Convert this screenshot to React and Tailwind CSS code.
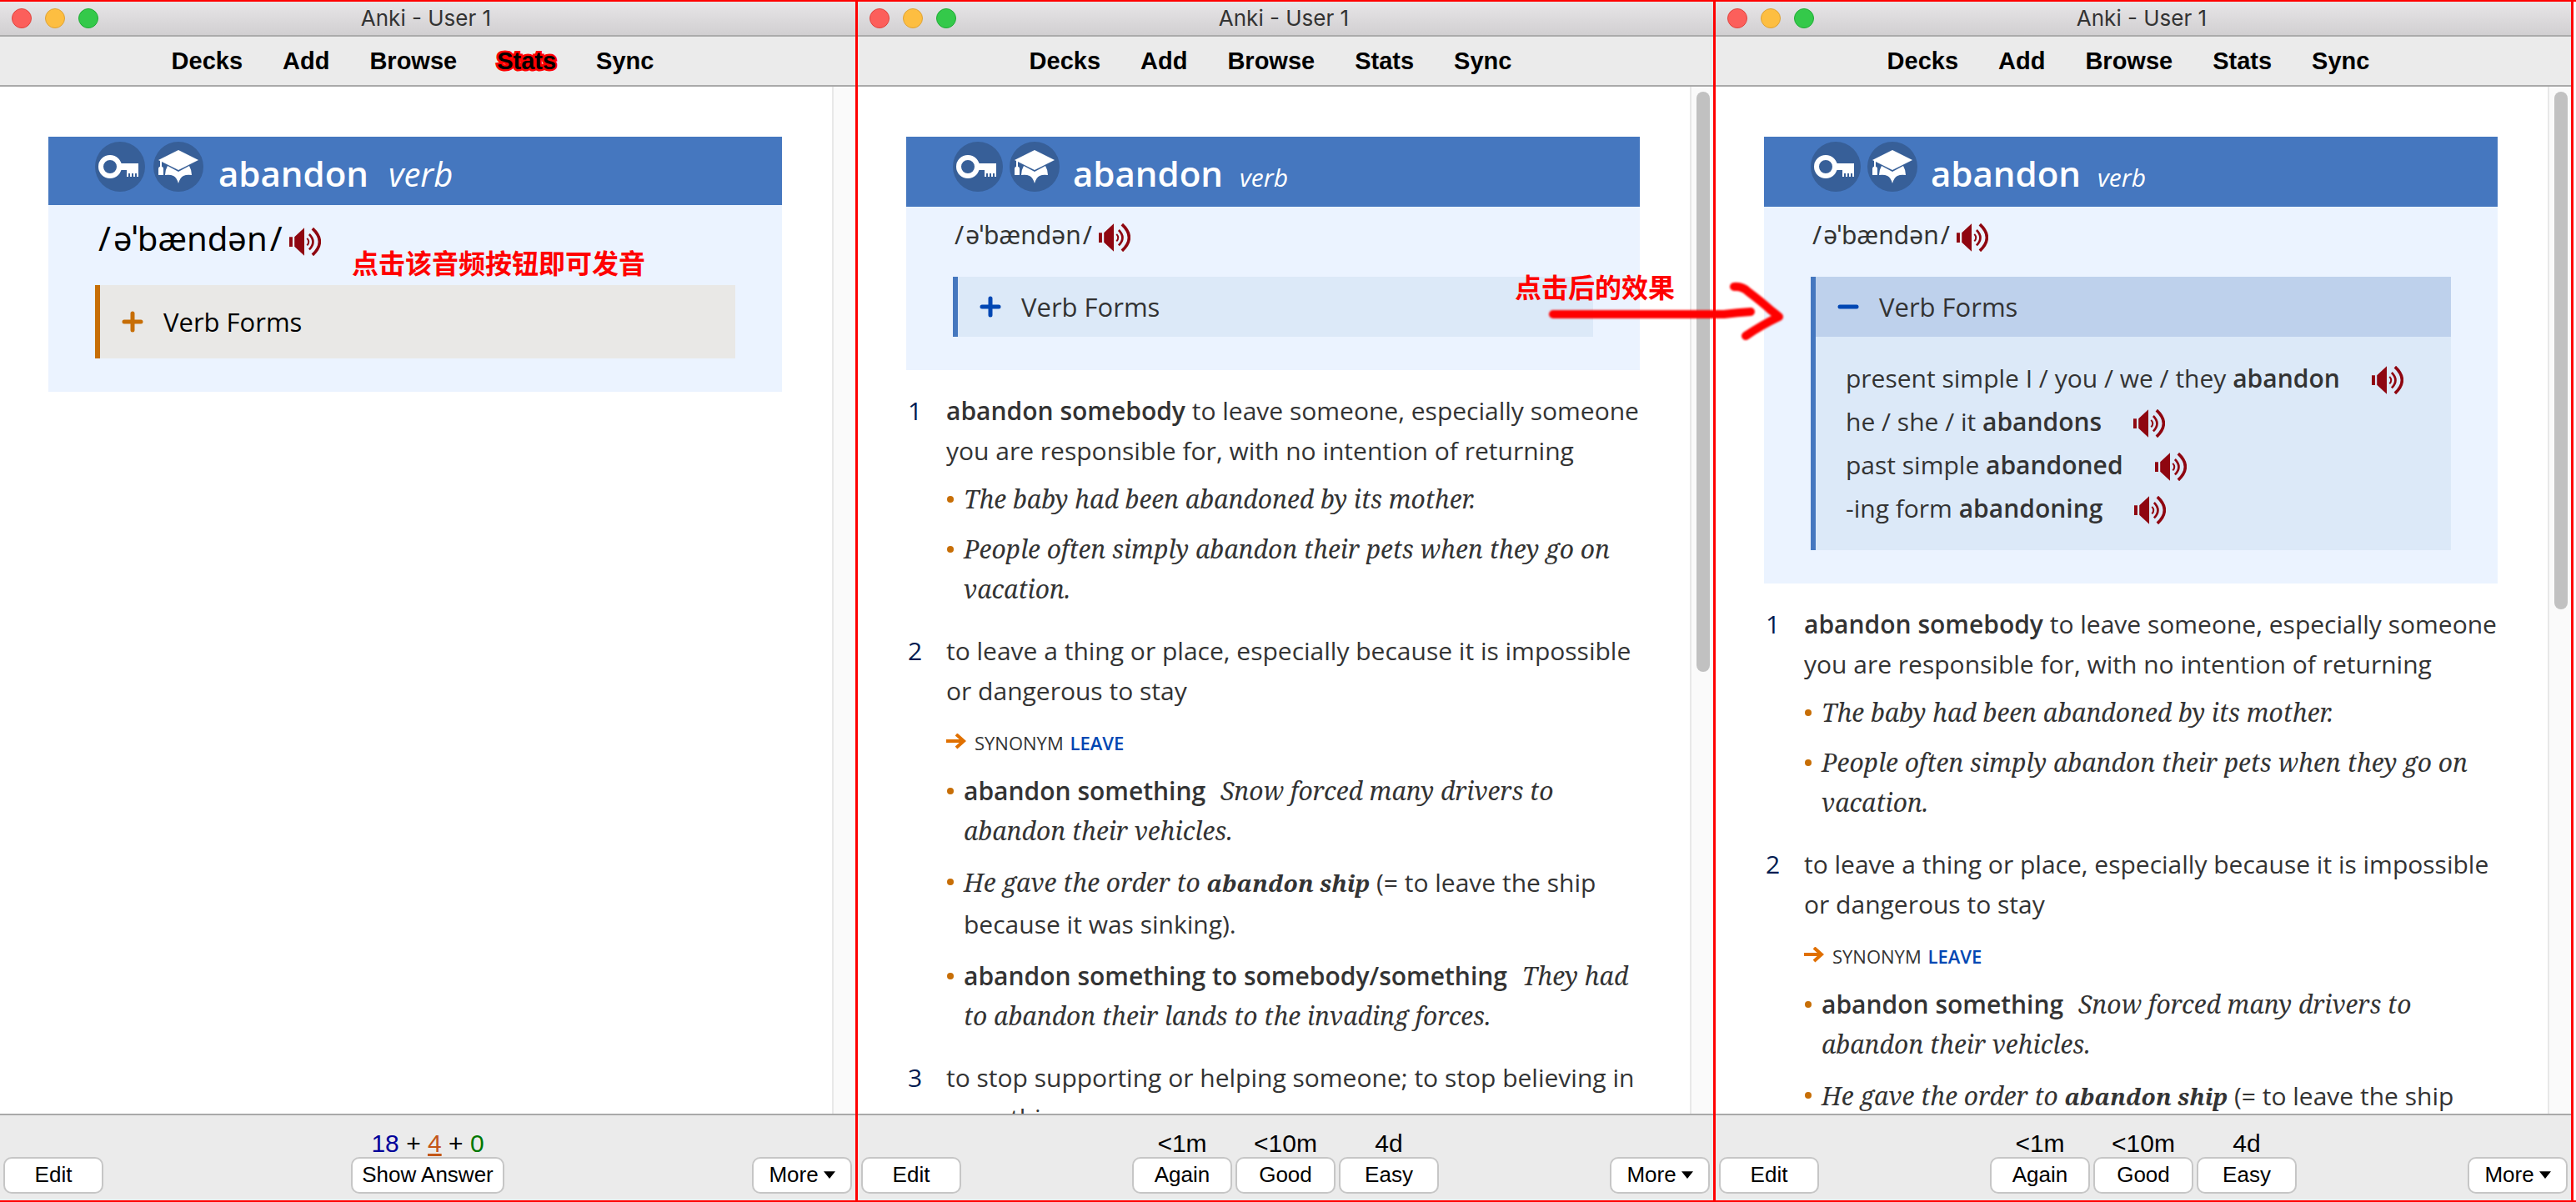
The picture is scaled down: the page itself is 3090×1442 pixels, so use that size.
const Speaker = ({ label }) => (
  <button type="button" aria-label={label} className="inline-flex shrink-0">
    <svg viewBox="0 0 116 103" className="h-[34px] w-[38px]" fill="none" stroke="#8f0610">
      <path d="M0 34h12v36H0zM19 34 55 0v103L19 69z" fill="#8f0610" stroke="none" />
      <path d="M65 39q12 13 0 26" strokeWidth="6" />
      <path d="M73 24q28 28 0 56" strokeWidth="8" />
      <path d="M85 3q52 48 0 97" strokeWidth="11" />
    </svg>
  </button>
);

const KeyIcon = () => (
  <svg viewBox="0 0 60 60" className="size-[60px] shrink-0">
    <circle cx="30" cy="30" r="30" fill="#375f98" />
    <circle cx="18" cy="30" r="11" fill="none" stroke="#fff" strokeWidth="6" />
    <path d="M30 26h22v16h-2v-4h-2v4h-2v-4h-2v4h-2v-4h-2v4h-2v-8h-8z" fill="#fff" />
  </svg>
);

const CapIcon = () => (
  <svg viewBox="0 0 60 60" className="size-[60px] shrink-0">
    <circle cx="30" cy="30" r="30" fill="#375f98" />
    <path d="M30 10 54 22 30 34 6 22z" fill="#fff" />
    <path d="M8 22h2v8h1l1 2v8H6v-8l1-2h1z" fill="#fff" />
    <path d="M17 29 30 36l13-7q3 5 3 11-6-1-10 1-4 2-6 9-2-7-6-9-4-2-10-1 0-6 3-11z" fill="#fff" />
  </svg>
);

const Toggle = ({ open, color }) => (
  <svg viewBox="0 0 26 26" className="size-[26px] shrink-0" stroke={color} strokeWidth="5" strokeLinecap="round">
    <path d={open ? "M3 13h20" : "M3 13h20M13 3v20"} />
  </svg>
);

function Header({ large }) {
  return (
    <div className={large ? "flex h-[82px] pl-14 pt-1.5 text-white" : "flex h-[84px] pl-14 pt-1.5 text-white"}>
      <div className={large ? "flex gap-2.5" : "flex gap-2"}>
        <KeyIcon />
        <CapIcon />
      </div>
      <div className={large ? "ml-4.5 flex items-baseline gap-6 leading-[76px]" : "ml-4 flex items-baseline gap-5 leading-[76px]"}>
        <h1 className="text-[42px] font-semibold">abandon</h1>
        <span className={large ? "text-[40px] italic" : "text-[30px] italic"}>verb</span>
      </div>
    </div>
  );
}

const forms = [
  ["present simple I / you / we / they", "abandon"],
  ["he / she / it", "abandons"],
  ["past simple", "abandoned"],
  ["-ing form", "abandoning"],
];

function Card({ large, open }) {
  return (
    <section className="bg-[#ebf3ff] pb-10">
      <div className="bg-[#4577bf]">
        <Header large={large} />
      </div>
      <div className={large ? "flex h-24 items-start gap-2 pl-15 pt-2 text-black" : "flex h-21 items-start gap-2 pl-[58px] pt-2 text-[#333]"}>
        <span className={large ? "flex gap-[3px] font-['Noto_Sans'] text-[40px] leading-[64px]" : "flex gap-0.5 font-['Noto_Sans'] text-[30px] leading-[52px]"}>
          <span>/</span>
          <span>əˈbændən</span>
          <span>/</span>
        </span>
        <span className={large ? "mt-[19px] flex" : "mt-3 flex"}>
          <Speaker label="Play abandon" />
        </span>
      </div>
      <div className={large ? "mx-14 border-l-6 border-[#c76e06] bg-[#e9e8e6] text-black" : "mx-14 border-l-6 border-[#4577bf] bg-[#dce9f8] text-[#333]"}>
        <button
          type="button"
          aria-expanded={!!open}
          className={
            large
              ? "flex h-[88px] w-full items-center gap-6 pl-[26px] text-[31px]"
              : open
                ? "flex h-18 w-full items-center gap-6 bg-[#bed1ec] pl-[26px] text-[31px]"
                : "flex h-18 w-full items-center gap-6 pl-[26px] text-[31px]"
          }
        >
          <Toggle open={open} color={large ? "#c76e06" : "#0047b3"} />
          <span>Verb Forms</span>
        </button>
        {open && (
          <ul className="pb-6 pl-9 pt-6">
            {forms.map(([who, form]) => (
              <li key={form} className="flex items-center gap-[38px] leading-[52px]">
                <span>
                  {who} <b className="font-semibold">{form}</b>
                </span>
                <span className="mt-1 flex">
                  <Speaker label={"Play " + form} />
                </span>
              </li>
            ))}
          </ul>
        )}
      </div>
    </section>
  );
}

const Item = ({ children, tall }) => (
  <li className={tall ? "flex gap-3 leading-[50px]" : "flex gap-3"}>
    <span className="ml-px mt-5 size-2 shrink-0 rounded-full bg-[#c76e06]" />
    <p>{children}</p>
  </li>
);

const Ex = ({ children }) => <i className="font-['Noto_Serif','Liberation_Serif',serif] text-[30px]">{children}</i>;
const B = ({ children }) => <b className="font-semibold">{children}</b>;
const Lead = ({ children }) => <b className="mr-2.5 font-semibold">{children}</b>;

function Sense({ n, children }) {
  return (
    <li className="flex">
      <span className="w-[46px] shrink-0 text-[#001a50]">{n}</span>
      <div className="min-w-0 flex-1">{children}</div>
    </li>
  );
}

function Senses() {
  return (
    <ol className="mt-[25px] flex flex-col gap-[26px] pl-0.5 leading-[48px] text-[#333]">
      <Sense n="1">
        <p>
          <B>abandon somebody</B> to leave someone, especially someone you are responsible for, with no intention of returning
        </p>
        <ul className="mt-2.5 flex flex-col gap-3">
          <Item>
            <Ex>The baby had been abandoned by its mother.</Ex>
          </Item>
          <Item>
            <Ex>People often simply abandon their pets when they go on vacation.</Ex>
          </Item>
        </ul>
      </Sense>
      <Sense n="2">
        <p>to leave a thing or place, especially because it is impossible or dangerous to stay</p>
        <p className="mt-3.5 flex items-center gap-2.5 text-[22px]">
          <svg viewBox="0 0 24 22" className="h-[22px] w-6" fill="none" stroke="#e07000" strokeWidth="4">
            <path d="M0 9h21M12 1l9 8-9 8" />
          </svg>
          <span>
            SYNONYM{" "}
            <a href="#leave" className="ml-0.5 font-semibold text-[#0047b3]">
              LEAVE
            </a>
          </span>
        </p>
        <ul className="mt-2.5 flex flex-col gap-[13px]">
          <Item>
            <Lead>abandon something</Lead> <Ex>Snow forced many drivers to abandon their vehicles.</Ex>
          </Item>
          <Item tall>
            <Ex>
              He gave the order to <b className="text-[28px]">abandon ship</b>
            </Ex>{" "}
            (= to leave the ship because it was sinking).
          </Item>
          <Item>
            <Lead>abandon something to somebody/something</Lead> <Ex>They had to abandon their lands to the invading forces.</Ex>
          </Item>
        </ul>
      </Sense>
      <Sense n="3">
        <p>to stop supporting or helping someone; to stop believing in something</p>
      </Sense>
    </ol>
  );
}

const btn = "flex h-11 items-center justify-center rounded-[10px] border-2 border-[#c6c6c6] bg-white pb-0.5 text-[26px] leading-none";

function Footer({ question }) {
  return (
    <footer className="grid h-26 shrink-0 grid-cols-[1fr_auto_1fr] items-end border-t-2 border-[#a9a9a9] bg-[#ebebeb] px-1 pb-2 font-['Liberation_Sans',sans-serif] text-black">
      <button type="button" className={btn + " w-30"}>
        Edit
      </button>
      {question ? (
        <div className="flex flex-col items-center">
          <p className="text-[30px] leading-8">
            <span className="text-[#000099]">18</span> + <u className="text-[#c35617]">4</u> + <span className="text-[#007700]">0</span>
          </p>
          <button type="button" className={btn + " w-[184px]"}>
            Show Answer
          </button>
        </div>
      ) : (
        <div className="flex gap-1">
          {[
            ["<1m", "Again"],
            ["<10m", "Good"],
            ["4d", "Easy"],
          ].map(([time, label]) => (
            <div key={label} className="flex flex-col items-center">
              <span className="text-[30px] leading-8">{time}</span>
              <button type="button" className={btn + " w-30"}>
                {label}
              </button>
            </div>
          ))}
        </div>
      )}
      <button type="button" className={btn + " w-30 gap-1.5 justify-self-end"}>
        More
        <svg viewBox="0 0 16 10" className="h-[9px] w-3.5">
          <path d="M0 0h16L8 10z" />
        </svg>
      </button>
    </footer>
  );
}

const nav = ["Decks", "Add", "Browse", "Stats", "Sync"];

function Win({ question, open, thumb, children }) {
  return (
    <section className="relative flex min-h-0 min-w-0 flex-col border-r-3 border-[#ff0000]">
      <header className="grid h-[42px] shrink-0 grid-cols-[1fr_auto_1fr] items-center border-b-2 border-[#ababab] bg-linear-to-b from-[#e8e6e8] to-[#d1cfd1] px-3.5">
        <div className="flex gap-4">
          <span className="size-6 rounded-full border border-[#e0443e] bg-[#fc5f5b]" />
          <span className="size-6 rounded-full border border-[#dea236] bg-[#fdbe41]" />
          <span className="size-6 rounded-full border border-[#1fac34] bg-[#34c94a]" />
        </div>
        <h2 className="pr-1 font-['Inter',sans-serif] text-[26px] leading-none text-[#333]">Anki - User 1</h2>
      </header>
      <nav className="flex h-15 shrink-0 items-center justify-center gap-12 border-b-2 border-[#a9a9a9] bg-[#ebebeb] pr-9 font-['Liberation_Sans',sans-serif] text-[29px] font-bold leading-none text-black">
        {nav.map((t) => (
          <a
            key={t}
            href={"#" + t.toLowerCase()}
            className={question && t === "Stats" ? "[-webkit-text-stroke:5px_#ff0000] [paint-order:stroke_fill] [text-shadow:0_0_2px_#ff0000]" : ""}
          >
            {t}
          </a>
        ))}
      </nav>
      <div className="flex min-h-0 flex-1 bg-white">
        <main className="min-w-0 flex-1 overflow-hidden pl-[58px] pr-15 pt-15">
          <Card large={question} open={open} />
          {!question && <Senses />}
        </main>
        <div className="w-7 shrink-0 border-l-2 border-[#e8e8e8] bg-[#fafafa] pl-1.5 pt-1.5">
          {thumb && <div className={thumb} />}
        </div>
      </div>
      <Footer question={question} />
      {children}
    </section>
  );
}

const note = "absolute z-10 whitespace-nowrap font-['Noto_Sans_CJK_SC',sans-serif] text-[32px] font-bold leading-8 text-[#ff0000]";

export default function App() {
  return (
    <div className="flex h-screen flex-col overflow-hidden border-y-2 border-[#ff0000] bg-white pr-[3px] font-['Open_Sans',sans-serif] text-[30px]">
      <div className="grid min-h-0 flex-1 grid-cols-3 grid-rows-[minmax(0,1fr)]">
        <Win question>
          <p className={note + " left-[422px] top-[296px]"}>点击该音频按钮即可发音</p>
        </Win>
        <Win thumb="h-[696px] w-4 rounded-full bg-[#c1c1c1]">
          <p className={note + " left-[788px] top-[325px]"}>点击后的效果</p>
          <svg viewBox="0 0 290 90" className="absolute left-[824px] top-[328px] z-10 h-[90px] w-[290px] overflow-visible" fill="none" stroke="#ff0000" strokeWidth="10" strokeLinecap="round" strokeLinejoin="round">
            <g className="blur-[1px]">
              <path d="M10 47H215q16-2 32-3" />
              <path d="M227 14q10-1 17 6 16 12 27 22 9 7 10 8-21 10-40 23" />
            </g>
          </svg>
        </Win>
        <Win open thumb="h-[621px] w-4 rounded-full bg-[#c1c1c1]" />
      </div>
    </div>
  );
}
